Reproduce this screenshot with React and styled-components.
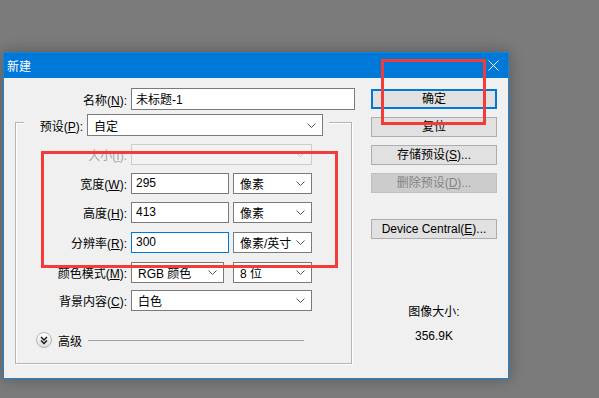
import React from "react";
import styled, { createGlobalStyle } from "styled-components";

const GlobalStyle = createGlobalStyle`
  html, body { margin: 0; padding: 0; }
  body {
    background: #7b7b7b;
    font-family: "Liberation Sans", "Noto Sans CJK SC", sans-serif;
    font-size: 12px;
    color: #000;
  }
`;

const Page = styled.div`
  position: relative;
  width: 599px;
  height: 398px;
  box-sizing: border-box;
  padding: 52px 0 0 3px;
  overflow: hidden;
`;

const Dialog = styled.div`
  width: 506px;
  height: 327px;
  box-sizing: border-box;
  border: 1px solid #1883d7;
  background: #f0f0f0;
  box-shadow: 0 0 14px rgba(0, 0, 0, 0.3);
  display: flex;
  flex-direction: column;
`;

const TitleBar = styled.div`
  height: 25px;
  flex-shrink: 0;
  background: #0078d7;
  color: #fff;
  display: flex;
  align-items: center;
  justify-content: space-between;
  padding: 0 9px 0 3px;
`;

const Body = styled.div`
  flex: 1;
  display: flex;
`;

const LeftCol = styled.div`
  padding: 10px 0 0 11px;
  display: flex;
  flex-direction: column;
`;

const RightCol = styled.div`
  margin-left: 16px;
  padding-top: 11px;
  width: 126px;
  display: flex;
  flex-direction: column;
  align-items: center;
`;

const Field = styled.div`
  display: flex;
  align-items: center;
  gap: 4px;
  height: ${p => p.h || 21}px;
  margin-top: ${p => p.mt || 0}px;
`;

const Label = styled.span`
  width: ${p => p.w}px;
  text-align: right;
  white-space: nowrap;
  color: ${p => (p.disabled ? "#a6a6a6" : "#000")};
`;

const TextInput = styled.input`
  width: ${p => p.w}px;
  height: 100%;
  box-sizing: border-box;
  margin: 0;
  padding: 0 4px 2px;
  border: 1px solid ${p => (p.focused ? "#0078d7" : "#7a7a7a")};
  background: #fff;
  font-family: "Liberation Sans", "Noto Sans CJK SC", sans-serif;
  font-size: 12px;
  color: #000;
  outline: none;
`;

const Select = styled.div`
  width: ${p => p.w}px;
  height: 100%;
  box-sizing: border-box;
  margin-left: ${p => p.ml || 0}px;
  border: 1px solid ${p => (p.disabled ? "#cccccc" : "#7a7a7a")};
  background: ${p => (p.disabled ? "#f3f3f3" : "#fff")};
  display: flex;
  align-items: center;
  justify-content: space-between;
  padding: 0 6px 0 6px;
  white-space: nowrap;
`;

const Group = styled.div`
  margin-top: 12px;
  width: 337px;
  height: 242px;
  box-sizing: border-box;
  border: 1px solid #b3b3b3;
  box-shadow: 1px 1px 0 #fff, inset 1px 1px 0 #fff;
  display: flex;
  flex-direction: column;
`;

const LegendRow = styled(Field)`
  margin: -9px 0 0 8px;
  align-self: flex-start;
  padding-right: 6px;
  background: #f0f0f0;
`;

const Advanced = styled.div`
  display: flex;
  align-items: center;
  margin: 21px 0 0 20px;
  height: 16px;
  gap: 6px;
`;

const Rule = styled.div`
  width: 216px;
  height: 1px;
  background: #a0a0a0;
`;

const Button = styled.div`
  width: 126px;
  height: 20px;
  box-sizing: border-box;
  margin-top: ${p => p.mt || 0}px;
  border: 1px solid ${p => (p.primary ? "#0078d7" : p.disabled ? "#bfbfbf" : "#adadad")};
  box-shadow: ${p => (p.primary ? "inset 0 0 0 1px #0078d7" : "none")};
  background: ${p => (p.disabled ? "#cccccc" : "#e1e1e1")};
  color: ${p => (p.disabled ? "#838383" : "#000")};
  text-align: center;
  line-height: 18px;
  white-space: nowrap;
`;

const Info = styled.div`
  margin-top: ${p => p.mt}px;
  line-height: 16px;
`;

const Annotation = styled.div`
  position: absolute;
  left: ${p => p.x}px;
  top: ${p => p.y}px;
  width: ${p => p.w}px;
  height: ${p => p.h}px;
  box-sizing: border-box;
  border: 3px solid #f23b3b;
  pointer-events: none;
`;

const Chevron = ({ disabled }) => (
  <svg width="9" height="5" viewBox="0 0 9 5">
    <path d="M0.5 0.5 L4.5 4.5 L8.5 0.5" fill="none" stroke={disabled ? "#c4c4c4" : "#555"} strokeWidth="1" />
  </svg>
);

const Close = () => (
  <svg width="11" height="11" viewBox="0 0 11 11">
    <path d="M0.5 0.5 L10.5 10.5 M10.5 0.5 L0.5 10.5" stroke="#fff" strokeWidth="1" />
  </svg>
);

const ExpandIcon = () => (
  <svg width="16" height="16" viewBox="0 0 16 16">
    <defs>
      <linearGradient id="eg" x1="0" y1="0" x2="0" y2="1">
        <stop offset="0" stopColor="#ffffff" />
        <stop offset="1" stopColor="#dcdcdc" />
      </linearGradient>
    </defs>
    <circle cx="8" cy="8" r="7.5" fill="url(#eg)" stroke="#b4b4b4" />
    <path d="M5 5 L8 8 L11 5 M5 8.5 L8 11.5 L11 8.5" fill="none" stroke="#111" strokeWidth="1.4" />
  </svg>
);

const Drop = ({ w, ml, disabled, children }) => (
  <Select w={w} ml={ml} disabled={disabled}>
    <span>{children}</span>
    <Chevron disabled={disabled} />
  </Select>
);

export default function App() {
  return (
    <Page>
      <GlobalStyle />
      <Dialog>
        <TitleBar>
          <span>新建</span>
          <Close />
        </TitleBar>
        <Body>
          <LeftCol>
            <Field h={22}>
              <Label w={112}>名称(<u>N</u>):</Label>
              <TextInput w={224} defaultValue="未标题-1" />
            </Field>
            <Group>
              <LegendRow h={22}>
                <Label w={59}>预设(<u>P</u>):</Label>
                <Drop w={236}>自定</Drop>
              </LegendRow>
              <Field mt={8}>
                <Label w={111} disabled>大小(<u>I</u>):</Label>
                <Drop w={181} disabled></Drop>
              </Field>
              <Field mt={8}>
                <Label w={111}>宽度(<u>W</u>):</Label>
                <TextInput w={98} defaultValue="295" />
                <Drop w={79}>像素</Drop>
              </Field>
              <Field mt={8}>
                <Label w={111}>高度(<u>H</u>):</Label>
                <TextInput w={98} defaultValue="413" />
                <Drop w={79}>像素</Drop>
              </Field>
              <Field mt={9}>
                <Label w={111}>分辨率(<u>R</u>):</Label>
                <TextInput w={98} focused defaultValue="300" />
                <Drop w={79}>像素/英寸</Drop>
              </Field>
              <Field mt={9}>
                <Label w={111}>颜色模式(<u>M</u>):</Label>
                <Drop w={93}>RGB 颜色</Drop>
                <Drop w={79} ml={5}>8 位</Drop>
              </Field>
              <Field mt={7}>
                <Label w={111}>背景内容(<u>C</u>):</Label>
                <Drop w={181}>白色</Drop>
              </Field>
              <Advanced>
                <ExpandIcon />
                <span>高级</span>
                <Rule />
              </Advanced>
            </Group>
          </LeftCol>
          <RightCol>
            <Button primary>确定</Button>
            <Button mt={8}>复位</Button>
            <Button mt={8}>存储预设(<u>S</u>)...</Button>
            <Button mt={8} disabled>删除预设(<u>D</u>)...</Button>
            <Button mt={26}>Device Central(<u>E</u>)...</Button>
            <Info mt={65}>图像大小:</Info>
            <Info mt={8}>356.9K</Info>
          </RightCol>
        </Body>
      </Dialog>
      <Annotation x={381} y={59} w={105} h={66} />
      <Annotation x={41} y={151} w={297} h={117} />
    </Page>
  );
}
